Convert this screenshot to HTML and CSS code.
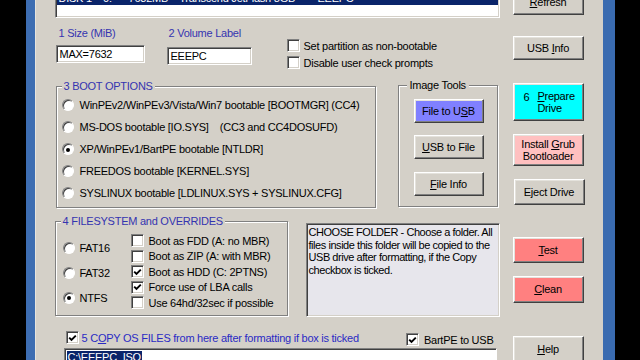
FILE: index.html
```html
<!DOCTYPE html>
<html>
<head>
<meta charset="utf-8">
<link rel="stylesheet" href="styles.css">
</head>
<body>
<div class="screen">
  <div class="bar"></div>
  <div class="frame"></div>
  <div class="window">
    <div class="main">
      <div class="listbox">
        <div class="list-inner">
          <div class="list-row sel">DISK 1&nbsp;&nbsp;&nbsp;&nbsp;0:&nbsp;&nbsp;&nbsp;&nbsp;&nbsp;&nbsp;7632MB&nbsp;&nbsp;&nbsp;&nbsp;Transcend JetFlash 8GB&nbsp;&nbsp;&nbsp;&nbsp;&nbsp;&nbsp;&nbsp;&nbsp;EEEPC</div>
        </div>
      </div>

      <div class="row-b">
        <div class="field f1">
          <div class="lbl">1 Size (MiB)</div>
          <div class="input">MAX=7632</div>
        </div>
        <div class="field f2">
          <div class="lbl">2 Volume Label</div>
          <div class="input">EEEPC</div>
        </div>
        <div class="opts">
          <div class="check-row"><span class="cb"></span><span>Set partition as non-bootable</span></div>
          <div class="check-row"><span class="cb"></span><span>Disable user check prompts</span></div>
        </div>
      </div>

      <div class="row-c">
        <fieldset class="group boot">
          <legend class="blue">3 BOOT OPTIONS</legend>
          <div class="radio-row"><span class="radio"></span><span>WinPEv2/WinPEv3/Vista/Win7 bootable [BOOTMGR] (CC4)</span></div>
          <div class="radio-row"><span class="radio"></span><span class="pre">MS-DOS bootable [IO.SYS]    (CC3 and CC4DOSUFD)</span></div>
          <div class="radio-row"><span class="radio on"><span class="dot"></span></span><span>XP/WinPEv1/BartPE bootable [NTLDR]</span></div>
          <div class="radio-row"><span class="radio"></span><span>FREEDOS bootable [KERNEL.SYS]</span></div>
          <div class="radio-row"><span class="radio"></span><span>SYSLINUX bootable [LDLINUX.SYS + SYSLINUX.CFG]</span></div>
        </fieldset>
        <fieldset class="group tools">
          <legend>Image Tools</legend>
          <div class="btn tool purple"><span>File to U<u>S</u>B</span></div>
          <div class="btn tool t2"><span><u>U</u>SB to File</span></div>
          <div class="btn tool t3"><span><u>F</u>ile Info</span></div>
        </fieldset>
      </div>

      <div class="row-d">
        <fieldset class="group fs">
          <legend class="blue">4 FILESYSTEM and OVERRIDES</legend>
          <div class="fs-body">
            <div class="fs-radios">
              <div class="fs-radio"><span class="radio"></span><span>FAT16</span></div>
              <div class="fs-radio"><span class="radio"></span><span>FAT32</span></div>
              <div class="fs-radio"><span class="radio on"><span class="dot"></span></span><span>NTFS</span></div>
            </div>
            <div class="fs-checks">
              <div class="fs-check"><span class="cb"></span><span>Boot as FDD (A: no MBR)</span></div>
              <div class="fs-check"><span class="cb"></span><span>Boot as ZIP (A: with MBR)</span></div>
              <div class="fs-check"><span class="cb"><svg viewBox="0 0 9 9" width="9" height="9"><path d="M1.2 3.6 L3.5 6 L7.8 1.6" fill="none" stroke="#000" stroke-width="1.9"/></svg></span><span>Boot as HDD (C: 2PTNS)</span></div>
              <div class="fs-check"><span class="cb"><svg viewBox="0 0 9 9" width="9" height="9"><path d="M1.2 3.6 L3.5 6 L7.8 1.6" fill="none" stroke="#000" stroke-width="1.9"/></svg></span><span>Force use of LBA calls</span></div>
              <div class="fs-check"><span class="cb"></span><span>Use 64hd/32sec if possible</span></div>
            </div>
          </div>
        </fieldset>
        <div class="help-text">CHOOSE FOLDER - Choose a folder. All<br>files inside this folder will be copied to the<br>USB drive after formatting, if the Copy<br>checkbox is ticked.</div>
      </div>

      <div class="row-e">
        <div class="copy"><span class="cb"><svg viewBox="0 0 9 9" width="9" height="9"><path d="M1.2 3.6 L3.5 6 L7.8 1.6" fill="none" stroke="#000" stroke-width="1.9"/></svg></span><span class="copy-text">5 C<u>O</u>PY OS FILES from here after formatting if box is ticked</span></div>
        <div class="bartpe"><span class="cb"><svg viewBox="0 0 9 9" width="9" height="9"><path d="M1.2 3.6 L3.5 6 L7.8 1.6" fill="none" stroke="#000" stroke-width="1.9"/></svg></span><span>BartPE to USB</span></div>
      </div>

      <div class="path-input"><span class="sel-text">C:\EEEPC_ISO</span></div>
    </div>

    <div class="side">
      <div class="btn b-refresh"><span><u>R</u>efresh</span></div>
      <div class="btn b-info"><span>USB <u>I</u>nfo</span></div>
      <div class="btn b-prepare cyan"><span class="num">6</span><span class="two-left"><u>P</u>repare<br>Drive</span></div>
      <div class="btn b-grub pink"><span class="two">Install <u>G</u>rub<br>Bootloader</span></div>
      <div class="btn b-eject"><span>Eject Drive</span></div>
      <div class="btn b-test red"><span><u>T</u>est</span></div>
      <div class="btn b-clean red"><span><u>C</u>lean</span></div>
      <div class="btn b-help"><span><u>H</u>elp</span></div>
    </div>
  </div>
  <div class="frame right"></div>
  <div class="bar"></div>
</div>
</body>
</html>
```

FILE: styles.css
```css
html, body {
  margin: 0;
  padding: 0;
  background: #000;
}

body {
  font-family: "Liberation Sans", Arial, sans-serif;
  font-size: 11px;
  letter-spacing: -0.25px;
  color: #000;
}

.screen {
  display: flex;
  width: 640px;
  height: 360px;
  overflow: hidden;
}

.bar {
  flex: 1 1 auto;
  width: 26px;
  background: #000;
}

.frame {
  width: 9px;
  flex: 0 0 9px;
  background: #3d6db2;
}

.frame.right {
  width: 12px;
  flex: 0 0 12px;
  background: #3a6bb0;
}

.window {
  flex: 0 0 568px;
  width: 568px;
  box-sizing: border-box;
  background: #d4d0c8;
  border-left: 1px solid #e6e4de;
  padding-left: 19px;
  display: flex;
  gap: 13px;
}

.main {
  width: 445px;
  display: flex;
  flex-direction: column;
}

.main > *,
.side > * {
  flex-shrink: 0;
}

/* list box */
.listbox {
  height: 18px;
  box-sizing: border-box;
  background: #fff;
  border: 1px solid;
  border-color: #808080 #fff #fff #808080;
  border-top: none;
  box-shadow: inset 1px 0 #404040, inset -1px -1px #d4d0c8;
  overflow: hidden;
}

.list-inner {
  margin-top: -9px;
  padding: 0 1px;
}

.list-row {
  height: 14px;
  line-height: 14px;
  white-space: nowrap;
  padding-left: 2px;
}

.list-row.sel {
  background: #0a246a;
  color: #fff;
}

/* row b */
.row-b {
  display: flex;
  align-items: flex-start;
}

.field {
  display: flex;
  flex-direction: column;
}

.f1 {
  margin-left: 1px;
  width: 89px;
}

.f2 {
  margin-left: 22px;
  width: 85px;
}

.lbl {
  color: #3434b0;
  line-height: 14px;
  padding-top: 8px;
  padding-left: 3px;
  white-space: nowrap;
}

.f2 .lbl {
  padding-left: 2px;
}

.input {
  height: 18px;
  box-sizing: border-box;
  margin-top: 5px;
  background: #fff;
  border: 1px solid;
  border-color: #808080 #fff #fff #808080;
  box-shadow: inset 1px 1px #404040, inset -1px -1px #d4d0c8;
  padding: 2px 2px 0 3px;
  line-height: 13px;
  white-space: nowrap;
}

.f2 .input {
  margin-top: 7px;
}

.opts {
  margin-left: 35px;
  padding-top: 19px;
}

.check-row {
  height: 17px;
  display: flex;
  align-items: center;
  gap: 4px;
  white-space: nowrap;
}

/* checkbox + radio */
.cb {
  width: 13px;
  height: 13px;
  flex: 0 0 13px;
  box-sizing: border-box;
  background: #fff;
  border: 1px solid;
  border-color: #808080 #fff #fff #808080;
  box-shadow: inset 1px 1px #404040, inset -1px -1px #d4d0c8;
  display: flex;
  align-items: center;
  justify-content: center;
}

.cb svg {
  display: block;
  margin: 1px 0 0 1px;
}

.radio {
  width: 12px;
  height: 12px;
  flex: 0 0 12px;
  box-sizing: border-box;
  border-radius: 50%;
  background: #fff;
  border: 1px solid;
  border-color: #808080 #fff #fff #808080;
  box-shadow: inset 1px 1px #404040;
  display: flex;
  align-items: center;
  justify-content: center;
}

.dot {
  width: 4px;
  height: 4px;
  border-radius: 50%;
  background: #000;
  margin: 1px 0 0 1px;
}

/* group boxes */
.group {
  margin: 0;
  padding: 0 5px;
  min-width: 0;
  border: 1px solid #808080;
  box-shadow: inset 1px 1px #fff, 1px 1px #fff;
}

.group legend {
  padding: 0 2px;
  line-height: 14px;
  background: #d4d0c8;
  white-space: nowrap;
}

.blue {
  color: #3434b0;
}

.row-c {
  display: flex;
  align-items: flex-start;
  margin-top: 7px;
}

.boot {
  width: 320px;
  box-sizing: border-box;
  margin-left: 1px;
  margin-top: 1px;
  padding-top: 1px;
  padding-bottom: 3px;
}

.radio-row {
  height: 22px;
  display: flex;
  align-items: center;
  gap: 6px;
  white-space: nowrap;
}

.pre {
  white-space: pre;
}

.tools {
  width: 100px;
  box-sizing: border-box;
  margin-left: 22px;
  padding: 0 0 10px 8px;
}

.tools legend {
  padding: 0 3px;
}

.tool {
  width: 70px;
  height: 24px;
  margin-left: 7px;
  margin-top: 7px;
}

.tool.t2 {
  margin-top: 12px;
}

.tool.t3 {
  margin-top: 13px;
}

/* row d */
.row-d {
  display: flex;
  align-items: flex-start;
  margin-top: 6px;
}

.fs {
  width: 233px;
  box-sizing: border-box;
  padding-bottom: 4px;
}

.fs-body {
  display: flex;
}

.fs-radios {
  width: 70px;
  padding-top: 7px;
}

.fs-radio {
  height: 25px;
  display: flex;
  align-items: center;
  gap: 5px;
  padding-left: 2px;
}

.fs-checks {
  padding-top: 5px;
}

.fs-check {
  height: 15.5px;
  display: flex;
  align-items: center;
  gap: 5px;
  white-space: nowrap;
}

.help-text {
  width: 194px;
  height: 94px;
  box-sizing: border-box;
  margin-left: 18px;
  margin-top: 9px;
  background: #e7e6ec;
  border: 1px solid;
  border-color: #808080 #fff #fff #808080;
  box-shadow: inset 1px 1px #404040, inset -1px -1px #d4d0c8;
  padding: 2px 2px 0 2px;
  line-height: 12.5px;
  letter-spacing: -0.45px;
  white-space: nowrap;
  overflow: hidden;
}

/* row e */
.row-e {
  display: flex;
  align-items: flex-start;
  justify-content: space-between;
  margin-top: 14px;
  height: 15px;
  padding-right: 6px;
}

.copy {
  display: flex;
  align-items: center;
  margin-left: 11px;
  gap: 3px;
  height: 13px;
}

.copy-text {
  color: #2a2ac4;
  white-space: nowrap;
}

.bartpe {
  display: flex;
  align-items: center;
  gap: 5px;
  height: 13px;
  margin-top: 2px;
}

.path-input {
  margin-top: 2px;
  margin-left: 9px;
  width: 433px;
  height: 20px;
  box-sizing: border-box;
  background: #fff;
  border: 1px solid;
  border-color: #808080 #fff #fff #808080;
  box-shadow: inset 1px 1px #404040;
  padding: 2px 0 0 2px;
  line-height: 13px;
}

.sel-text {
  background: #0a246a;
  color: #fff;
  padding: 0 1px;
}

/* buttons */
.btn {
  box-sizing: border-box;
  border: 1px solid;
  border-color: #fff #404040 #404040 #fff;
  box-shadow: inset -1px -1px #808080, inset 1px 1px #e4e2dc;
  background: #d4d0c8;
  display: flex;
  align-items: center;
  justify-content: center;
  white-space: nowrap;
  line-height: 13px;
}

.purple {
  background: #8080ff;
}

.cyan {
  background: #00ffff;
}

.pink {
  background: #ffc0c0;
}

.red {
  background: #ff8080;
}

.side {
  width: 71px;
  display: flex;
  flex-direction: column;
}

.side .btn {
  width: 71px;
}

.b-refresh {
  margin-top: -10px;
  height: 25px;
}

.b-info {
  margin-top: 21px;
  height: 24px;
}

.b-prepare {
  margin-top: 23px;
  height: 38px;
  justify-content: flex-start;
  padding-left: 10px;
  gap: 8px;
  align-items: center;
}

.num {
  align-self: flex-start;
  margin-top: 7px;
}

.two-left {
  line-height: 12.5px;
  text-align: left;
}

.b-grub {
  margin-top: 13px;
  height: 32px;
}

.two {
  text-align: center;
  line-height: 12px;
}

.b-eject {
  margin-top: 13px;
  margin-left: 1px;
  height: 26px;
}

.b-test {
  margin-top: 32px;
  height: 26px;
}

.b-clean {
  margin-top: 13px;
  height: 27px;
}

.b-help {
  margin-top: 33px;
  height: 26px;
}
```
